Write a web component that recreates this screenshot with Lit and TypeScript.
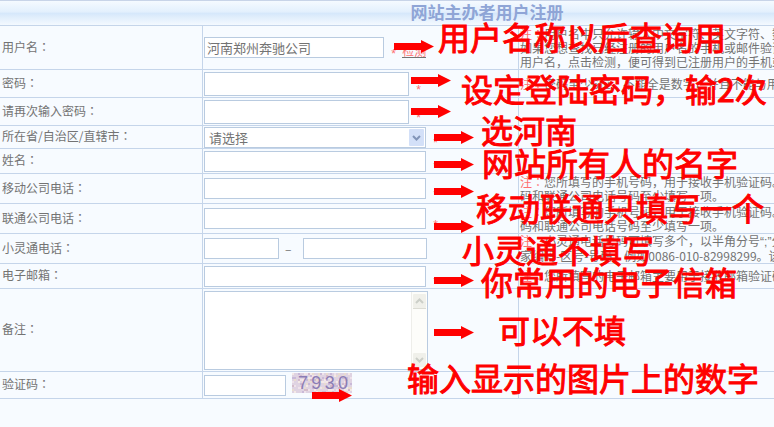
import { LitElement, html, css, svg, nothing } from "lit";
import { customElement } from "lit/decorators.js";

interface Note { text: string; x: number; y: number; }
interface Point { x: number; y: number; }

// Guidance laid freely over the form; y is the vertical centre.
const NOTES: Note[] = [
  { text: "用户名称以后查询用", x: 438, y: 36 },
  { text: "设定登陆密码，输2次", x: 461, y: 88 },
  { text: "选河南", x: 481, y: 129 },
  { text: "网站所有人的名字", x: 482, y: 162 },
  { text: "移动联通只填写一个", x: 476, y: 207 },
  { text: "小灵通不填写", x: 462, y: 249 },
  { text: "你常用的电子信箱", x: 481, y: 281 },
  { text: "可以不填", x: 498, y: 329 },
  { text: "输入显示的图片上的数字", x: 407, y: 377 },
];

const ARROWS: Point[] = [
  { x: 394, y: 46 },
  { x: 411, y: 80 },
  { x: 411, y: 111 },
  { x: 434, y: 137 },
  { x: 434, y: 164 },
  { x: 434, y: 191 },
  { x: 434, y: 226 },
  { x: 434, y: 280 },
  { x: 434, y: 332 },
  { x: 312, y: 395 },
];

@customElement("app-root")
export class AppRoot extends LitElement {
  static styles = css`
    :host {
      display: block;
      position: relative;
      min-height: 100vh;
      overflow: hidden;
      background: #f7fbff;
      color: #737373;
      font: 12px/14px "Noto Sans CJK SC", sans-serif;
    }
    * { box-sizing: border-box; }
    form { width: calc(100% + 200px); margin: 0; }
    h1 {
      margin: 0;
      height: 26px;
      border-top: 1px solid #c8d4e8;
      border-bottom: 1px solid #c5d5ea;
      background: linear-gradient(#f5faff, #e3f0fd 45%, #d6e8fb 52%, #e2effc 70%, #f4f9ff);
      color: #8fa5d6;
      font-size: 17px;
      line-height: 22px;
      font-weight: 700;
      text-align: center;
    }
    .row {
      display: grid;
      grid-template-columns: 202px 316px 1fr;
      border-bottom: 1px solid #c5d5ea;
      min-height: 30px;
    }
    .h44 { min-height: 44px; }
    .h28 { min-height: 28px; }
    .h25 { min-height: 25px; }
    .h23 { min-height: 23px; }
    .h83 { min-height: 83px; }
    .h27 { min-height: 27px; }
    .name, .field, .hint { display: flex; align-items: center; }
    .name { padding: 0 0 2px 2px; }
    .field, .hint { border-left: 1px solid #c5d5ea; padding-left: 1px; }
    .hint { white-space: nowrap; }
    .colon { font-family: "Noto Sans CJK TC", sans-serif; }
    .latin { font-family: "Liberation Sans", sans-serif; }
    input, select, textarea {
      display: block;
      margin: 0;
      padding: 0 2px;
      height: 21px;
      width: 222px;
      border: 1px solid #b9cbe0;
      border-radius: 0;
      outline: 0;
      background: #fff;
      color: #737373;
      font: 13px/19px "Noto Sans CJK SC", sans-serif;
      appearance: none;
      resize: none;
    }
    select { padding-left: 4px; }
    .w180 { width: 180px; }
    .w205 { width: 205px; height: 24px; }
    .w75 { width: 75px; }
    .w124 { width: 124px; }
    .w82 { width: 82px; }
    textarea { width: 224px; height: 79px; overflow: hidden; }
    .dash { width: 24px; padding-left: 6px; }
    .wrap { position: relative; }
    .drop { position: absolute; right: 2px; top: 2px; pointer-events: none; display: block; }
    .bar { position: absolute; right: 1px; top: 1px; pointer-events: none; display: block; }
    .star { color: #ff7070; margin: 14px 0 0 6px; font: 12px/6px "Liberation Mono", monospace; }
    .check { color: #ff7070; margin: 7px 0 0 5px; text-decoration: none; border-bottom: 1px solid #737373; line-height: 13px; }
    .red { color: #ff7070; }
    .captcha {
      position: relative;
      display: flex;
      justify-content: space-between;
      width: 60px;
      height: 20px;
      margin: 0 0 4px 6px;
      padding: 0 4px 0 6px;
      background: #dfd3e2;
      color: #8b7cb4;
      font: 18px/20px "Liberation Sans", sans-serif;
    }
    .grain { position: absolute; left: 0; top: 0; width: 100%; height: 100%; }
    .digit { position: relative; }
    .note {
      position: absolute;
      color: #f00;
      -webkit-text-stroke: 1px #f00;
      font-size: 32px;
      line-height: 32px;
      margin-top: -16px;
      white-space: nowrap;
      pointer-events: none;
    }
    .arrow { position: absolute; margin-top: -6px; display: block; pointer-events: none; }
  `;

  private star = html`<span class="star">*</span>`;

  private row(size: string, id: string, label: string, field: unknown, hint: unknown = nothing) {
    return html`<div class="row ${size}">
      <div class="name"><label for=${id}>${label}<span class="colon">：</span></label></div>
      <div class="field">${field}</div>
      <div class="hint"><div>${hint}</div></div>
    </div>`;
  }

  private hint(first: unknown, ...rest: string[]) {
    return html`<span class="red">注<span class="colon">：</span></span>${first}${rest.map((t) => html`<br />${t}`)}`;
  }

  private grain() {
    const tints = ["#f4e9e6", "#c9b9d8", "#efe3ea", "#d3bccb", "#e9dccf"];
    const cells = [];
    for (let y = 0; y < 20; y += 2) {
      for (let x = 0; x < 60; x += 2) {
        const n = (x * 37 + y * 91 + x * y * 13 + ((x * x) % 17) * 5) % 11;
        if (n < 5) cells.push(svg`<rect x=${x} y=${y} width="2" height="2" fill=${tints[n]} />`);
      }
    }
    return html`<svg class="grain" viewBox="0 0 60 20" aria-hidden="true">${cells}</svg>`;
  }

  render() {
    return html`
      <form @submit=${(e: Event) => e.preventDefault()}>
        <h1>网站主办者用户注册</h1>
        ${this.row("h44", "user", "用户名",
          html`<input id="user" class="w180" value="河南郑州奔驰公司" />${this.star}<a class="check" href="#check">检测</a>`,
          this.hint("用户名中只允许输入中文字符、英文字符、数", "如果您想查找已经注册的用户名的手机或邮件验证", "用户名，点击检测，便可得到已注册用户的手机或"))}
        ${this.row("h28", "pass", "密码",
          html`<input id="pass" class="w205" type="password" />${this.star}`,
          this.hint("密码至少6位，不能全是数字，并且不能与用户"))}
        ${this.row("h28", "again", "请再次输入密码",
          html`<input id="again" class="w205" type="password" />${this.star}`)}
        ${this.row("h23", "area", "所在省/自治区/直辖市",
          html`<div class="wrap">
              <select id="area"><option>请选择</option></select>
              <svg class="drop" width="15" height="17" viewBox="0 0 15 17" aria-hidden="true">
                <rect width="15" height="17" rx="1" fill="#d3e0f8" />
                <path d="M4 7l3.5 3.5L11 7" fill="none" stroke="#8295b8" stroke-width="2" />
              </svg>
            </div>${this.star}`)}
        ${this.row("h25", "person", "姓名", html`<input id="person" />${this.star}`)}
        ${this.row("", "mobile", "移动公司电话", html`<input id="mobile" />${this.star}`,
          this.hint("您所填写的手机号码，用于接收手机验证码。", "码和联通公司电话号码至少填写一项。"))}
        ${this.row("", "unicom", "联通公司电话", html`<input id="unicom" />${this.star}`,
          this.hint("您所填写的手机号码，用于接收手机验证码。", "码和联通公司电话号码至少填写一项。"))}
        ${this.row("", "phs", "小灵通电话",
          html`<input id="phs" class="w75" /><span class="dash">–</span><input class="w124" aria-label="小灵通号码" />`,
          this.hint(html`小灵通电话号码可填写多个，以半角分号<span class="latin">“;”</span>分`, "家编码-区号-号码，例如0086-010-82998299。该项"))}
        ${this.row("h25", "mail", "电子邮箱", html`<input id="mail" />${this.star}`,
          this.hint("您所填写的电子邮箱主要用于接收邮箱验证码"))}
        ${this.row("h83", "memo", "备注",
          html`<div class="wrap">
            <textarea id="memo"></textarea>
            <svg class="bar" width="16" height="77" viewBox="0 0 16 77" aria-hidden="true">
              <rect width="16" height="77" fill="#fdfdfa" />
              <path d="M.5 0v77" stroke="#eeeeea" />
              <rect x="2" y="2" width="13" height="14" rx="1" fill="#f0f0ea" />
              <path d="M2 16.500h13" stroke="#dcdcd4" />
              <path d="M5 11l3.500-3.500L12 11" fill="none" stroke="#cccfc8" stroke-width="2" />
              <rect x="2" y="61" width="13" height="14" rx="1" fill="#f0f0ea" />
              <path d="M5 66l3.500 3.500L12 66" fill="none" stroke="#cccfc8" stroke-width="2" />
            </svg>
          </div>`)}
        ${this.row("h27", "code", "验证码",
          html`<input id="code" class="w82" />
            <div class="captcha">${this.grain()}${["7", "9", "3", "0"].map((d) => html`<span class="digit">${d}</span>`)}</div>`)}
      </form>
      ${ARROWS.map((a) => html`<svg class="arrow" style="left:${a.x}px;top:${a.y}px" width="40" height="13" viewBox="0 0 40 13" aria-hidden="true">
        <path d="M0 3h27V0l13 6.500L27 13v-3H0z" fill="#f00" />
      </svg>`)}
      ${NOTES.map((n) => html`<div class="note" style="left:${n.x}px;top:${n.y}px">${n.text}</div>`)}
    `;
  }
}
